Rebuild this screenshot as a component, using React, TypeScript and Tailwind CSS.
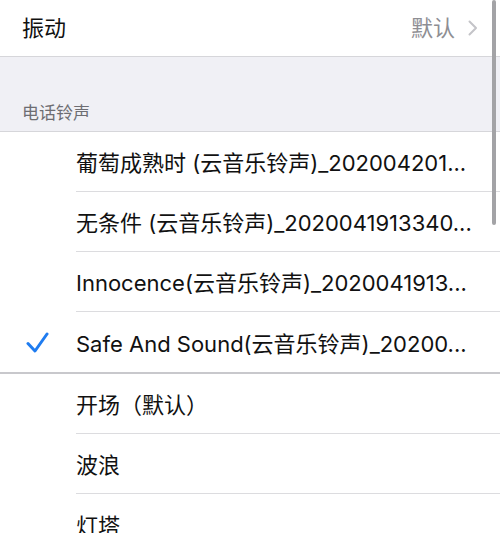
import React from 'react'

const font = { fontFamily: 'Inter, "Noto Sans CJK SC", sans-serif' }

// names are shown already shortened, as the phone list shows them
const tones = [
  { name: '葡萄成熟时 (云音乐铃声)_202004201...', checked: false },
  { name: '无条件 (云音乐铃声)_2020041913340...', checked: false },
  { name: 'Innocence(云音乐铃声)_2020041913...', checked: false },
  { name: 'Safe And Sound(云音乐铃声)_20200...', checked: true },
]

const builtIn = ['开场（默认）', '波浪', '灯塔']

function Check() {
  return (
    <svg width="24" height="22" viewBox="0 0 24 22" className="ml-[25px]">
      <polyline points="3,11.5 10,19 22,2" fill="none" stroke="#1f7cf0" strokeWidth="3" strokeLinecap="round" strokeLinejoin="round" />
    </svg>
  )
}

function ToneRow({ name, checked, last }: { name: string; checked?: boolean; last?: boolean }) {
  return (
    <div className="flex h-[60px]">
      <div className="w-[76px] shrink-0 flex items-center pt-[2px]">{checked && <Check />}</div>
      <div className={`flex-1 min-w-0 flex items-center pt-[3px] ${last ? '' : 'border-b border-[#dcdcdf]'}`}>
        <span className="whitespace-nowrap text-[22px] text-[#111] leading-none">{name}</span>
      </div>
    </div>
  )
}

export default function App() {
  return (
    <div className="relative w-[500px] h-[533px] overflow-hidden bg-white" style={font}>
      <div className="h-[57px] flex items-center justify-between pl-[22px] pr-[22px] border-b border-[#d6d6da]">
        <span className="text-[22px] text-[#111]">振动</span>
        <div className="flex items-center gap-[13px]">
          <span className="text-[22px] text-[#8e8e93]">默认</span>
          <svg width="10" height="16" viewBox="0 0 10 16">
            <polyline points="1.5,1.5 8,8 1.5,14.5" fill="none" stroke="#c4c4c8" strokeWidth="2" strokeLinecap="round" strokeLinejoin="round" />
          </svg>
        </div>
      </div>

      <div className="h-[75px] bg-[#f0f0f5] border-b border-[#d6d6da] flex items-end pl-[22px] pb-[5px]">
        <span className="text-[17px] text-[#6d6d72]">电话铃声</span>
      </div>

      <div className="border-b-2 border-[#c8c8cc]">
        {tones.map((t, i) => (
          <ToneRow key={t.name} name={t.name} checked={t.checked} last={i === tones.length - 1} />
        ))}
      </div>

      <div>
        {builtIn.map((n, i) => (
          <ToneRow key={n} name={n} last={i === builtIn.length - 1} />
        ))}
      </div>

      <div className="absolute right-[4px] top-0 w-[4px] h-[225px] rounded-full bg-[#a3a3a6]" />
    </div>
  )
}
